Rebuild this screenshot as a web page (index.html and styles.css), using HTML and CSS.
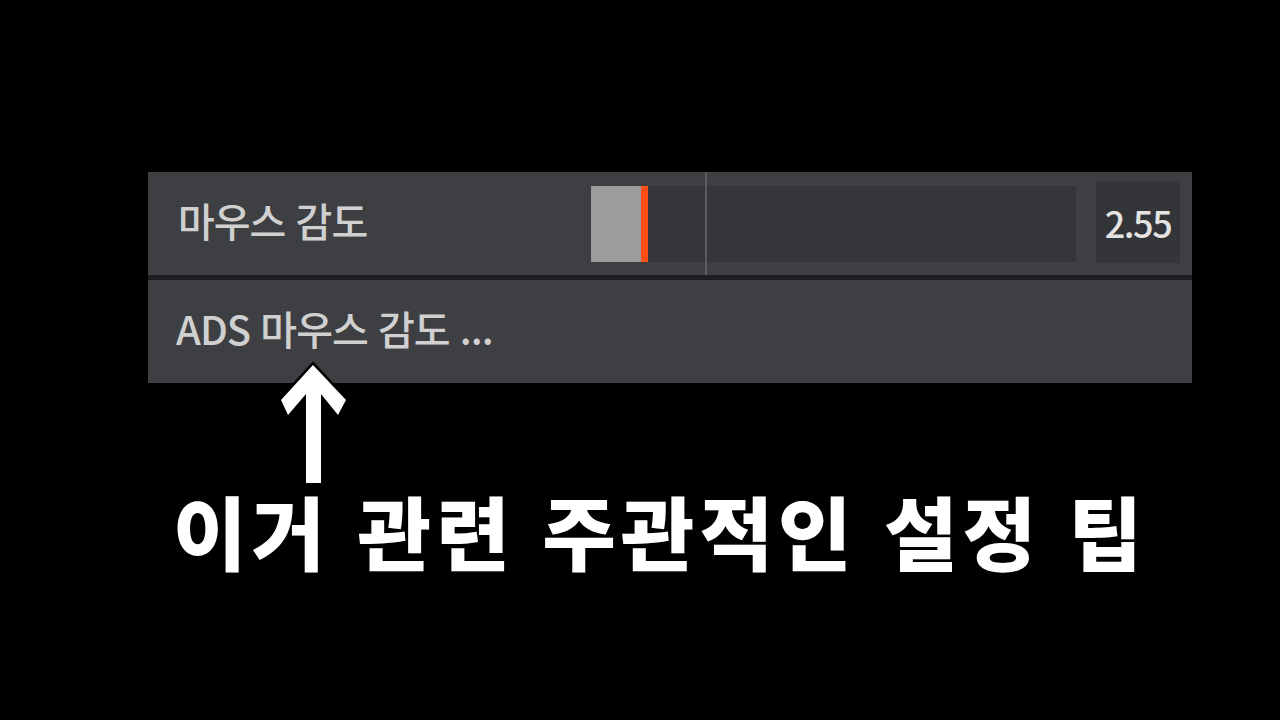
FILE: index.html
```html
<!doctype html>
<html lang="ko">
<head>
<meta charset="utf-8">
<meta name="viewport" content="width=device-width, initial-scale=1.0">
<link rel="stylesheet" href="styles.css">
<title>마우스 감도</title>
</head>
<body>
<div class="stage">
<div class="settings">
<div class="row row-slider">
<span class="label">마우스 감도</span>
<div class="slider">
<div class="track">
<div class="fill" style="width: 11.8%"></div>
</div>
<span class="default-mark"></span>
</div>
<span class="value">2.55</span>
</div>
<div class="row">
<span class="label">ADS 마우스 감도 ...</span>
</div>
</div>

<svg class="pointer" width="76" height="130" viewBox="0 0 76 130">
<polygon points="37,7 70,42 62,57 45,36 45,125 30,125 30,36 12,57 5,42" />
</svg>

<p class="caption">이거 관련 주관적인 설정 팁</p>
</div>
</body>
</html>
```

FILE: styles.css
```css
html,
body {
    margin: 0;
    padding: 0;
}
body {
    background-color: #000;
    width: 1280px;
    height: 720px;
    overflow: hidden;
    font-family: "Noto Sans CJK KR", "Noto Sans", sans-serif;
}
.stage {
    position: relative;
    padding: 172px 0 0 148px;
}

/* settings panel */
.settings {
    width: 1044px;
    display: flex;
    flex-direction: column;
    gap: 5px;
    background-color: #1c1d1f;
}
.row {
    height: 103px;
    background-color: #3e3f42;
    display: flex;
    align-items: center;
    padding: 0 12px 0 28px;
}
.label {
    color: #d0d0d0;
    font-size: 40px;
    font-weight: 500;
    letter-spacing: -1px;
    line-height: 1;
    padding-bottom: 8px;
}
.row-slider {
    padding-left: 30px;
}
.row-slider .label {
    flex: 0 0 413px;
}
.slider {
    position: relative;
    flex: 1;
    align-self: stretch;
    display: flex;
    align-items: center;
}
.track {
    width: 100%;
    height: 76px;
    margin-top: 1px;
    background-color: #35363a;
    display: flex;
}
.fill {
    height: 100%;
    background-color: #9c9c9c;
    border-right: 7px solid #ff4f17;
    box-sizing: border-box;
}
.default-mark {
    position: absolute;
    top: 0;
    bottom: 0;
    left: 114px;
    width: 2px;
    background-color: #5b5c5f;
}
.value {
    flex: 0 0 84px;
    height: 82px;
    margin-left: 20px;
    background-color: #343538;
    color: #e4e4e4;
    font-size: 36px;
    font-weight: 500;
    letter-spacing: -1.5px;
    display: flex;
    align-items: center;
    justify-content: center;
    margin-bottom: 4px;
}

/* arrow pointing at the ADS row */
.pointer {
    position: absolute;
    left: 276px;
    top: 358px;
}
.pointer polygon {
    fill: #fff;
    stroke: #000;
    stroke-width: 5px;
    paint-order: stroke;
    stroke-linejoin: miter;
}

.caption {
    margin: 106px 0 0 25px;
    color: #fff;
    font-size: 80px;
    font-weight: 900;
    letter-spacing: 5px;
    line-height: 1;
}
```
